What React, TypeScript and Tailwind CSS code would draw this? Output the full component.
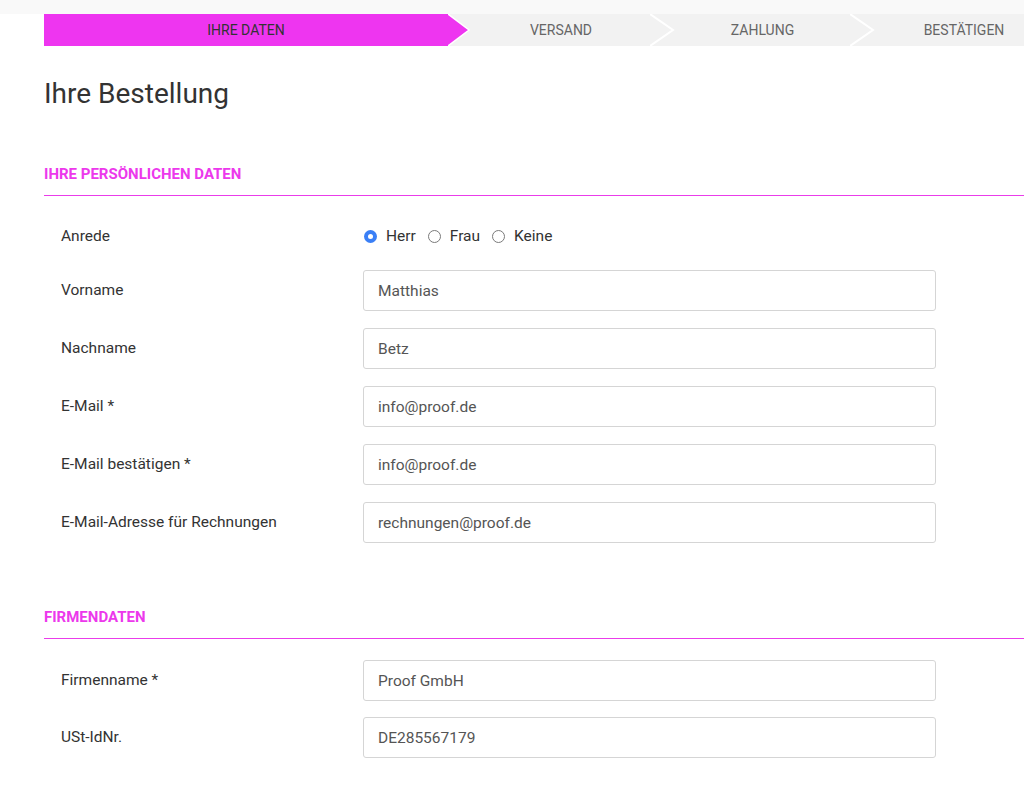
import React from "react";

const font = "font-['Roboto','Noto_Sans',sans-serif]";

function Radio({ checked, label }: { checked?: boolean; label: string }) {
  return (
    <label className="flex items-center gap-[9px] mr-[12px]">
      {checked ? (
        <span className="w-[13px] h-[13px] rounded-full bg-[#3a7ff6] flex items-center justify-center">
          <span className="w-[5px] h-[5px] rounded-full bg-white" />
        </span>
      ) : (
        <span className="w-[13px] h-[13px] rounded-full border border-[#7a7a7a] bg-white" />
      )}
      <span className="text-[15.5px] text-[#333]">{label}</span>
    </label>
  );
}

function Field({ label, value }: { label: string; value: string }) {
  return (
    <div className="flex items-center">
      <div className="w-[319px] pl-[17px] pt-px text-[15.5px] text-[#333]">{label}</div>
      <input
        readOnly
        defaultValue={value}
        className={`${font} w-[573px] h-[41px] border border-[#d5d5d5] rounded-[3px] bg-white px-[14px] text-[15.5px] text-[#555] outline-none`}
      />
    </div>
  );
}

function SectionHeading({ children }: { children: React.ReactNode }) {
  return (
    <div>
      <h2 className="text-[15px] leading-5 font-bold uppercase text-[#ec38ec]">{children}</h2>
      <div className="mt-[11px] h-px bg-[#ea3cea]" />
    </div>
  );
}

export default function App() {
  return (
    <div className={`${font} bg-white w-[1024px] h-[789px] overflow-hidden`}>
      <div className="h-[14px] bg-[#f9f9f9]" />
      <div className="pl-[44px]">
        {/* Stepper */}
        <div className="flex h-8 bg-[#f2f2f2] w-[1010px] text-[14px] uppercase">
          <div className="w-[404px] bg-[#ee35f0] flex items-center justify-center text-[#333]">Ihre Daten</div>
          <svg width="24" height="32" viewBox="0 0 24 32" className="shrink-0 block">
            <polygon points="0,0 21,16 0,32" fill="#ee35f0" />
            <polyline points="0,0 21,16 0,32" fill="none" stroke="#ffffff" strokeWidth="1.5" />
          </svg>
          <div className="w-[178px] flex items-center justify-center text-[#666]">Versand</div>
          <svg width="25" height="32" viewBox="0 0 25 32" className="shrink-0 block">
            <polyline points="0,0 23,16 0,32" fill="none" stroke="#ffffff" strokeWidth="2" />
          </svg>
          <div className="w-[175px] flex items-center justify-center text-[#666]">Zahlung</div>
          <svg width="25" height="32" viewBox="0 0 25 32" className="shrink-0 block">
            <polyline points="0,0 23,16 0,32" fill="none" stroke="#ffffff" strokeWidth="2" />
          </svg>
          <div className="w-[178px] flex items-center justify-center text-[#666]">Bestätigen</div>
        </div>

        <h1 className="mt-[31px] text-[28px] leading-[34px] text-[#333]">Ihre Bestellung</h1>

        <div className="mt-[53px]">
          <SectionHeading>Ihre persönlichen Daten</SectionHeading>
          <div className="pt-[20px] flex items-center h-[61px] -mb-[7px]">
            <div className="w-[319px] pl-[17px] text-[15.5px] text-[#333]">Anrede</div>
            <div className="flex items-center pl-[1px]">
              <Radio checked label="Herr" />
              <Radio label="Frau" />
              <Radio label="Keine" />
            </div>
          </div>
          <div className="mt-[20px] flex flex-col gap-[17px]">
            <Field label="Vorname" value="Matthias" />
            <Field label="Nachname" value="Betz" />
            <Field label="E-Mail *" value="info@proof.de" />
            <Field label="E-Mail bestätigen *" value="info@proof.de" />
            <Field label="E-Mail-Adresse für Rechnungen" value="rechnungen@proof.de" />
          </div>
        </div>

        <div className="mt-[64px]">
          <SectionHeading>Firmendaten</SectionHeading>
          <div className="mt-[21px] flex flex-col gap-[16px]">
            <Field label="Firmenname *" value="Proof GmbH" />
            <Field label="USt-IdNr." value="DE285567179" />
          </div>
        </div>
      </div>
    </div>
  );
}
